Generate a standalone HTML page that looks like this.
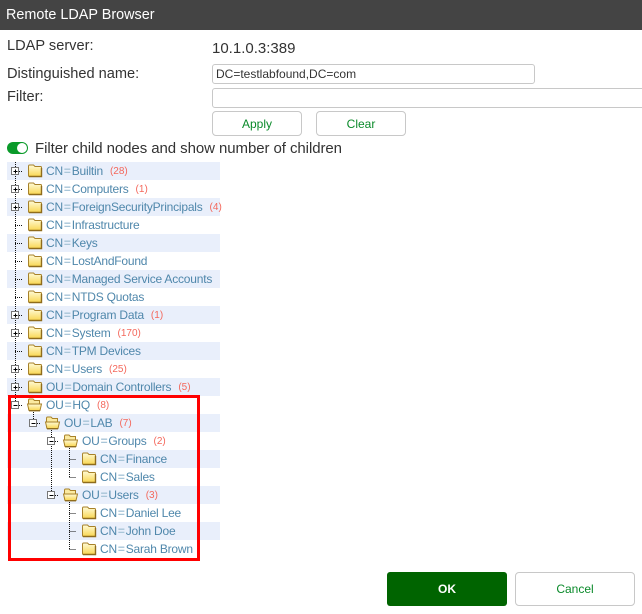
<!DOCTYPE html>
<html><head><meta charset="utf-8">
<style>
html,body{margin:0;padding:0;background:#fff}
#p{position:relative;width:642px;height:614px;overflow:hidden;background:#fff;font-family:"Liberation Sans",sans-serif;color:#333}
#p>*{position:absolute}
.l{font-size:14.6px;line-height:18px;white-space:nowrap;color:#333}
.inp{box-sizing:border-box;border:1px solid #c8c8c8;border-radius:3px;height:20px}
.b{box-sizing:border-box;border:1px solid #c8c8c8;border-radius:4px;background:#fff;color:#0a8a2a;font-size:12px;text-align:center}
.band{left:7px;width:213px;height:18px;background:#e9effb}
.t{font-size:12px;letter-spacing:-.21px;line-height:18px;color:#4f87ab;white-space:nowrap}
.t b{font-weight:bold;color:#a9c6d9;margin:0 1px}
.t i{font-style:normal;color:#f4685c;font-size:10px;letter-spacing:0;margin-left:7px;vertical-align:1px}
svg{left:0;top:0}
</style></head><body><div id="p">
<div style="left:0;top:0;width:642px;height:30px;background:#444"></div>
<div style="left:6px;top:5px;color:#fff;font-size:14.4px;line-height:20px;white-space:nowrap">Remote LDAP Browser</div>
<div class="l" style="left:7px;top:37px">LDAP server:</div>
<div class="l" style="left:212px;top:40px;font-size:15px">10.1.0.3:389</div>
<div class="l" style="left:7px;top:65px">Distinguished name:</div>
<div class="l" style="left:7px;top:88px">Filter:</div>
<div class="inp" style="left:212px;top:64px;width:323px"></div>
<div style="left:216px;top:65px;font-size:12px;line-height:18px;color:#333;white-space:nowrap">DC=testlabfound,DC=com</div>
<div class="inp" style="left:212px;top:88px;width:440px"></div>
<div class="b" style="left:212px;top:111px;width:90px;height:25px;line-height:24px">Apply</div>
<div class="b" style="left:316px;top:111px;width:90px;height:25px;line-height:24px">Clear</div>
<div style="left:7px;top:142px;width:21px;height:12px;border-radius:6px;background:#0a9a2a"></div>
<div style="left:17px;top:143px;width:10px;height:10px;border-radius:5px;background:#fff"></div>
<div class="l" style="left:35px;top:140px;font-size:15px;letter-spacing:-.07px">Filter child nodes and show number of children</div>

<div class="band" style="top:162px"></div>
<div class="band" style="top:198px"></div>
<div class="band" style="top:234px"></div>
<div class="band" style="top:270px"></div>
<div class="band" style="top:306px"></div>
<div class="band" style="top:342px"></div>
<div class="band" style="top:378px"></div>
<div class="band" style="top:414px"></div>
<div class="band" style="top:450px"></div>
<div class="band" style="top:486px"></div>
<div class="band" style="top:522px"></div>

<svg width="642" height="614" viewBox="0 0 642 614">
<defs>
<linearGradient id="g" x1="0" y1="0" x2="0" y2="1"><stop offset="0" stop-color="#fffbd8"/><stop offset="1" stop-color="#f9d650"/></linearGradient>
<g id="f"><path d="M0.5 2.5Q0.5 1 1.5 1H5.5L7 2.5H12.5Q13.5 2.5 13.5 3.5V11.5Q13.5 12.5 12.5 12.5H1.5Q0.5 12.5 0.5 11.5Z" fill="url(#g)" stroke="#a8822a"/><path d="M1 12.5H13.5V4" fill="none" stroke="#8f6c1c" stroke-width="1.4"/></g>
<g id="o"><path d="M1.5 11.5V2.5Q1.5 1 2.5 1H6L7.5 2.5H12.5V6" fill="#fbeaa0" stroke="#a8822a"/><path d="M0.5 6H14.5L13 12.5H2Z" fill="url(#g)" stroke="#a8822a"/><path d="M2 12.7H13" stroke="#8f6c1c" stroke-width="1.4"/></g>
<g id="pb"><rect x="-3.5" y="-3.5" width="7" height="7" fill="#fff" stroke="#777"/><path d="M-1.5 0.5H2.5M0.5 -1.5V2.5" stroke="#000"/></g>
<g id="mb"><rect x="-3.5" y="-3.5" width="7" height="7" fill="#fff" stroke="#777"/><path d="M-1.5 0.5H2.5" stroke="#000"/></g>
</defs>
<g stroke="#111" stroke-dasharray="1 1" fill="none">
<path d="M15.5 162V405"/>
<path d="M19 171.5H22M19 189.5H22M19 207.5H22M15 225.5H22M15 243.5H22M15 261.5H22M15 279.5H22M15 297.5H22M19 315.5H22M19 333.5H22M15 351.5H22M19 369.5H22M19 387.5H22M19 405.5H22"/>
<path d="M33.5 410V423M37 423.5H40"/>
<path d="M51.5 428V495M55 441.5H58M55 495.5H58"/>
<path d="M69.5 446V477M69.5 477.5H76M69.5 459.5H76"/>
<path d="M69.5 500V549M69.5 513.5H76M69.5 531.5H76M69.5 549.5H76"/>
</g>
<use href="#pb" x="15" y="171"/><use href="#pb" x="15" y="189"/><use href="#pb" x="15" y="207"/>
<use href="#pb" x="15" y="315"/><use href="#pb" x="15" y="333"/><use href="#pb" x="15" y="369"/><use href="#pb" x="15" y="387"/>
<use href="#mb" x="15" y="405"/><use href="#mb" x="33" y="423"/><use href="#mb" x="51" y="441"/><use href="#mb" x="51" y="495"/>
<use href="#f" x="28" y="164"/><use href="#f" x="28" y="182"/><use href="#f" x="28" y="200"/><use href="#f" x="28" y="218"/>
<use href="#f" x="28" y="236"/><use href="#f" x="28" y="254"/><use href="#f" x="28" y="272"/><use href="#f" x="28" y="290"/>
<use href="#f" x="28" y="308"/><use href="#f" x="28" y="326"/><use href="#f" x="28" y="344"/><use href="#f" x="28" y="362"/><use href="#f" x="28" y="380"/>
<use href="#o" x="27" y="398"/><use href="#o" x="45" y="416"/><use href="#o" x="63" y="434"/><use href="#o" x="63" y="488"/>
<use href="#f" x="82" y="452"/><use href="#f" x="82" y="470"/><use href="#f" x="82" y="506"/><use href="#f" x="82" y="524"/><use href="#f" x="82" y="542"/>
</svg>

<div class="t" style="left:46px;top:162px">CN<b>=</b>Builtin<i>(28)</i></div>
<div class="t" style="left:46px;top:180px">CN<b>=</b>Computers<i>(1)</i></div>
<div class="t" style="left:46px;top:198px">CN<b>=</b>ForeignSecurityPrincipals<i>(4)</i></div>
<div class="t" style="left:46px;top:216px">CN<b>=</b>Infrastructure</div>
<div class="t" style="left:46px;top:234px">CN<b>=</b>Keys</div>
<div class="t" style="left:46px;top:252px">CN<b>=</b>LostAndFound</div>
<div class="t" style="left:46px;top:270px">CN<b>=</b>Managed Service Accounts</div>
<div class="t" style="left:46px;top:288px">CN<b>=</b>NTDS Quotas</div>
<div class="t" style="left:46px;top:306px">CN<b>=</b>Program Data<i>(1)</i></div>
<div class="t" style="left:46px;top:324px">CN<b>=</b>System<i>(170)</i></div>
<div class="t" style="left:46px;top:342px">CN<b>=</b>TPM Devices</div>
<div class="t" style="left:46px;top:360px">CN<b>=</b>Users<i>(25)</i></div>
<div class="t" style="left:46px;top:378px">OU<b>=</b>Domain Controllers<i>(5)</i></div>
<div class="t" style="left:46px;top:396px">OU<b>=</b>HQ<i>(8)</i></div>
<div class="t" style="left:64px;top:414px">OU<b>=</b>LAB<i>(7)</i></div>
<div class="t" style="left:82px;top:432px">OU<b>=</b>Groups<i>(2)</i></div>
<div class="t" style="left:100px;top:450px">CN<b>=</b>Finance</div>
<div class="t" style="left:100px;top:468px">CN<b>=</b>Sales</div>
<div class="t" style="left:82px;top:486px">OU<b>=</b>Users<i>(3)</i></div>
<div class="t" style="left:100px;top:504px">CN<b>=</b>Daniel Lee</div>
<div class="t" style="left:100px;top:522px">CN<b>=</b>John Doe</div>
<div class="t" style="left:100px;top:540px">CN<b>=</b>Sarah Brown</div>

<div style="left:8px;top:395px;width:192px;height:166px;box-sizing:border-box;border:3px solid #f00"></div>

<div style="left:387px;top:572px;width:120px;height:34px;background:#006400;border-radius:3px;color:#fff;font-size:12px;font-weight:bold;text-align:center;line-height:35px">OK</div>
<div class="b" style="left:515px;top:572px;width:120px;height:34px;line-height:32px">Cancel</div>
</div></body></html>
